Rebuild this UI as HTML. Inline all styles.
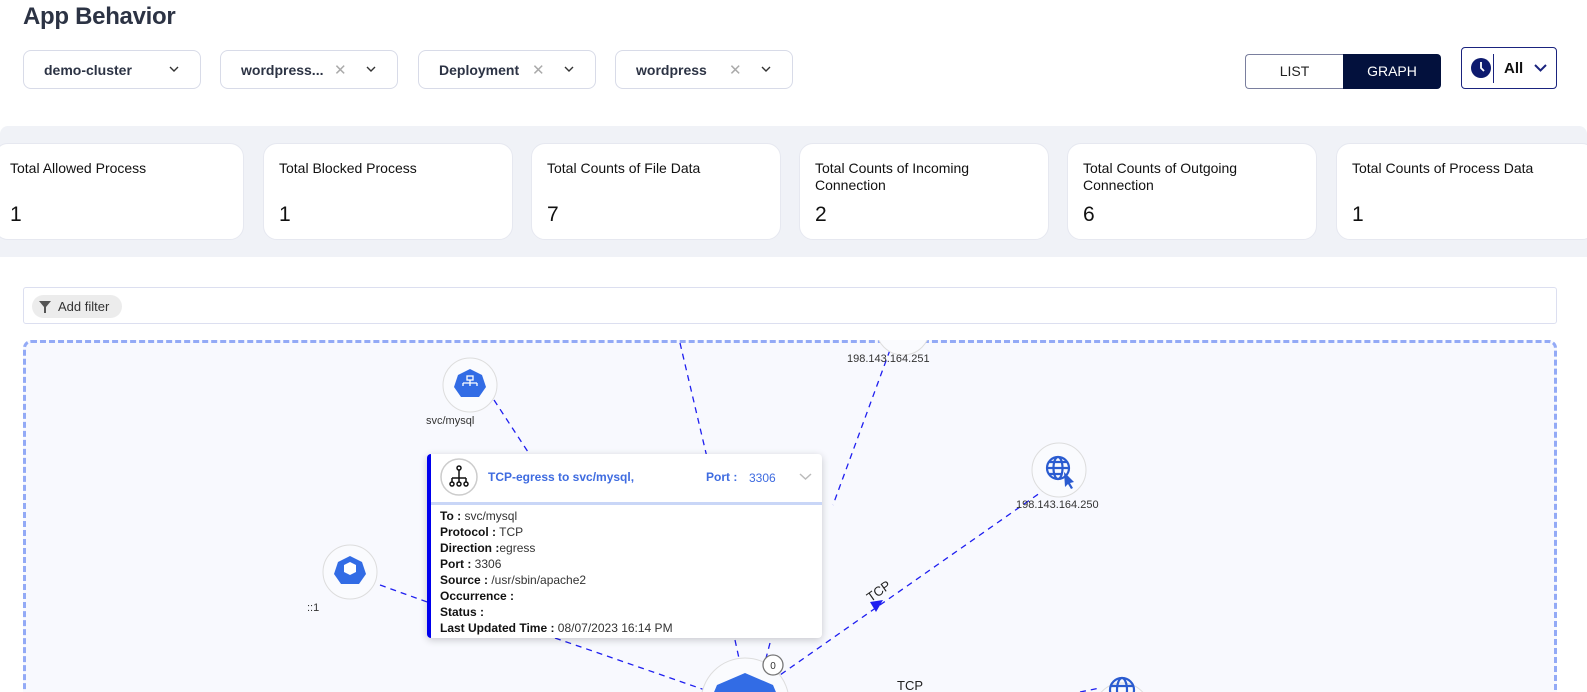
<!DOCTYPE html>
<html><head><meta charset="utf-8"><style>
*{box-sizing:border-box;margin:0;padding:0}
html,body{width:1587px;height:692px;overflow:hidden}
body{background:#fff;font-family:"Liberation Sans",sans-serif;position:relative;color:#111}
.abs{position:absolute}
h1{position:absolute;left:23px;top:3px;font-size:24px;font-weight:bold;color:#2c3344;letter-spacing:-0.3px}
.dd{position:absolute;top:50px;height:39px;border:1px solid #d8dbe8;border-radius:8px;font-size:14px;font-weight:bold;color:#2c3344;padding:11px 0 0 20px}
.dd .x{position:absolute;color:#aaa;font-weight:normal;font-size:15px;top:10px}
.dd svg{position:absolute;top:15px}
.band{position:absolute;left:0;top:126px;width:1587px;height:131px;background:#f0f2f7;border-radius:8px 8px 0 0}
.card{position:absolute;top:143px;height:97px;width:250px;background:#fff;border-radius:14px;border:1px solid #e6e8f0}
.card .t{position:absolute;left:15px;top:16px;font-size:14px;color:#111;line-height:17px}
.card .v{position:absolute;left:15px;top:59px;font-size:21px;color:#111}
.tt{position:absolute;left:427px;top:454px;width:395px;height:184px;background:#fff;border-left:4px solid #0000ee;border-radius:4px;box-shadow:0 2px 8px rgba(0,0,0,.2)}
.tt .rows{position:absolute;left:9px;top:54px;font-size:12px;line-height:16px;color:#333}
.tt b{color:#111}
.lbl{position:absolute;font-size:11px;color:#333}
.clip{position:absolute;left:0;top:340px;width:1587px;height:352px;overflow:hidden}
</style></head><body>
<h1>App Behavior</h1>
<div class="dd" style="left:23px;width:178px">demo-cluster<svg style="left:145px" width="10" height="7"><path d="M1 1l4 4 4-4" stroke="#333" fill="none" stroke-width="1.4"/></svg></div>
<div class="dd" style="left:220px;width:178px">wordpress...<span class="x" style="left:113px">✕</span><svg style="left:145px" width="10" height="7"><path d="M1 1l4 4 4-4" stroke="#333" fill="none" stroke-width="1.4"/></svg></div>
<div class="dd" style="left:418px;width:178px">Deployment<span class="x" style="left:113px">✕</span><svg style="left:145px" width="10" height="7"><path d="M1 1l4 4 4-4" stroke="#333" fill="none" stroke-width="1.4"/></svg></div>
<div class="dd" style="left:615px;width:178px">wordpress<span class="x" style="left:113px">✕</span><svg style="left:145px" width="10" height="7"><path d="M1 1l4 4 4-4" stroke="#333" fill="none" stroke-width="1.4"/></svg></div>
<div class="abs" style="left:1245px;top:54px;width:98px;height:35px;border:1px solid #7a7f9e;border-right:none;border-radius:4px 0 0 4px;font-size:14px;color:#222;text-align:center;line-height:33px">LIST</div>
<div class="abs" style="left:1343px;top:54px;width:98px;height:35px;background:#03113d;border-radius:0 4px 4px 0;font-size:14px;color:#fff;text-align:center;line-height:35px">GRAPH</div>
<div class="abs" style="left:1461px;top:47px;width:96px;height:42px;border:1px solid #1a237e;border-radius:4px">
<svg class="abs" style="left:9px;top:10px" width="20" height="20"><circle cx="10" cy="10" r="10" fill="#0d1a6e"/><path d="M10 4v6l3 3" stroke="#fff" stroke-width="1.8" fill="none"/></svg>
<div class="abs" style="left:31px;top:6px;width:1px;height:29px;background:#1a237e"></div>
<div class="abs" style="left:42px;top:12px;font-size:15px;font-weight:bold;color:#111">All</div>
<svg class="abs" style="left:72px;top:16px" width="13" height="9"><path d="M1 1l5.5 5.5L12 1" stroke="#1a237e" stroke-width="2" fill="none"/></svg>
</div>
<div class="band"></div>
<div class="card" style="left:-6px"><div class="t">Total Allowed Process</div><div class="v">1</div></div>
<div class="card" style="left:263px"><div class="t">Total Blocked Process</div><div class="v">1</div></div>
<div class="card" style="left:531px"><div class="t">Total Counts of File Data</div><div class="v">7</div></div>
<div class="card" style="left:799px"><div class="t">Total Counts of Incoming<br>Connection</div><div class="v">2</div></div>
<div class="card" style="left:1067px"><div class="t">Total Counts of Outgoing<br>Connection</div><div class="v">6</div></div>
<div class="card" style="left:1336px;width:260px"><div class="t">Total Counts of Process Data</div><div class="v">1</div></div>
<div class="abs" style="left:0;top:257px;width:1587px;height:435px;background:#fff;border-radius:8px 8px 0 0"></div>
<div class="abs" style="left:23px;top:287px;width:1534px;height:37px;border:1px solid #dcdff0;border-radius:3px">
<div class="abs" style="left:8px;top:7px;height:23px;width:90px;background:#ececec;border-radius:12px;font-size:13px;color:#333;padding:4px 0 0 26px">Add filter</div>
<svg class="abs" style="left:15px;top:13px" width="12" height="12"><path d="M0 0h12L7 6v6H5V6z" fill="#555"/></svg>
</div>
<div class="clip">
<div class="abs" style="left:23px;top:0;width:1534px;height:400px;background:#f8f9fe;border:3px dashed #93aaf6;border-radius:8px"></div>
<svg class="abs" style="left:0;top:-340px" width="1587" height="692">
<g stroke="#1f1ff0" stroke-width="1.3" stroke-dasharray="6,5" fill="none">
<path d="M680 343L710 470"/>
<path d="M494 400L530 455"/>
<path d="M890 350L833 505"/>
<path d="M1047 488L780 675"/>
<path d="M380 585L430 603"/>
<path d="M555 638L705 690"/>
<path d="M735 640L740 663"/>
<path d="M770 643L765 662"/>
<path d="M1080 692L1100 688"/>
</g>
<path d="M870 602L883 600L876 612Z" fill="#1f1ff0"/>
<text x="868" y="598" font-size="13" fill="#222" transform="rotate(-35 876 596)" font-family="Liberation Sans">TCP</text>
<text x="897" y="690" font-size="13" fill="#222" font-family="Liberation Sans">TCP</text>
<circle cx="745" cy="702" r="44" fill="#fafbfe" stroke="#ddd"/>
<path d="M745 673l28 12 5 12v10h-66v-10l5-12z" fill="#326ce5"/>
<circle cx="773" cy="665" r="10" fill="#fff" stroke="#777" stroke-width="1.3"/>
<text x="773" y="669" font-size="10" text-anchor="middle" fill="#333" font-family="Liberation Sans">0</text>
<circle cx="903" cy="328" r="27" fill="#fafbfe" stroke="#ddd"/>
<circle cx="1122" cy="711" r="28" fill="#fafbfe" stroke="#ddd"/>
<g stroke="#2a5bd0" stroke-width="2.2" fill="none"><circle cx="1122" cy="690" r="12"/><ellipse cx="1122" cy="690" rx="5" ry="12"/><path d="M1110 686h24"/></g>
<circle cx="1059" cy="470" r="27" fill="#fafbfe" stroke="#ddd"/>
<g stroke="#2a5bd0" stroke-width="2.2" fill="none"><circle cx="1058" cy="468" r="11"/><ellipse cx="1058" cy="468" rx="4.5" ry="11"/><path d="M1047 468h22M1049 462h18M1049 474h12"/></g>
<path d="M1064 472l10 10-4 1 3 5-2 1-3-5-3 3z" fill="#2a5bd0"/>
<circle cx="470" cy="385" r="27" fill="#fafbfe" stroke="#ddd"/>
<path d="M470 369l12 6 4 12-7 10h-18l-7-10 4-12z" fill="#326ce5"/>
<g stroke="#fff" stroke-width="1.3" fill="none"><rect x="467" y="376" width="6" height="4"/><path d="M470 380v3M463 383h14M463 383v3M470 383v3M477 383v3"/></g>
<circle cx="350" cy="572" r="27" fill="#fafbfe" stroke="#ddd"/>
<path d="M350 556l12 6 4 12-7 10h-18l-7-10 4-12z" fill="#326ce5"/>
<path d="M344 565l6-3 6 3v7l-6 3-6-3z" fill="#fff"/>
</svg>
</div>
<div class="lbl" style="left:426px;top:415px">svc/mysql</div>
<div class="lbl" style="left:307px;top:602px">::1</div>
<div class="lbl" style="left:847px;top:353px">198.143.164.251</div>
<div class="lbl" style="left:1016px;top:499px">198.143.164.250</div>
<div class="tt">
<svg class="abs" style="left:9px;top:4px" width="40" height="40"><circle cx="19" cy="19" r="18" fill="#fff" stroke="#ccc" stroke-width="1.5"/><g stroke="#111" stroke-width="1.5" fill="none"><circle cx="19" cy="10" r="2"/><path d="M19 12v8M12 20h14M12 20v4M19 20v4M26 20v4"/><circle cx="12" cy="26" r="2"/><circle cx="19" cy="26" r="2"/><circle cx="26" cy="26" r="2"/></g></svg>
<div class="abs" style="left:57px;top:16px;font-size:12px;font-weight:bold;color:#3e6be0">TCP-egress to svc/mysql,</div>
<div class="abs" style="left:275px;top:16px;font-size:12px;font-weight:bold;color:#3e6be0">Port :</div>
<div class="abs" style="left:318px;top:17px;font-size:12px;color:#3e6be0">3306</div>
<svg class="abs" style="left:368px;top:19px" width="13" height="8"><path d="M1 1l5.5 5L12 1" stroke="#bbb" stroke-width="1.5" fill="none"/></svg>
<div class="abs" style="left:0;top:48px;width:391px;height:3px;background:#c9d6f7"></div>
<div class="rows"><b>To :</b> svc/mysql<br><b>Protocol :</b> TCP<br><b>Direction :</b>egress<br><b>Port :</b> 3306<br><b>Source :</b> /usr/sbin/apache2<br><b>Occurrence :</b><br><b>Status :</b><br><b>Last Updated Time :</b> 08/07/2023 16:14 PM</div>
</div>
</body></html>
